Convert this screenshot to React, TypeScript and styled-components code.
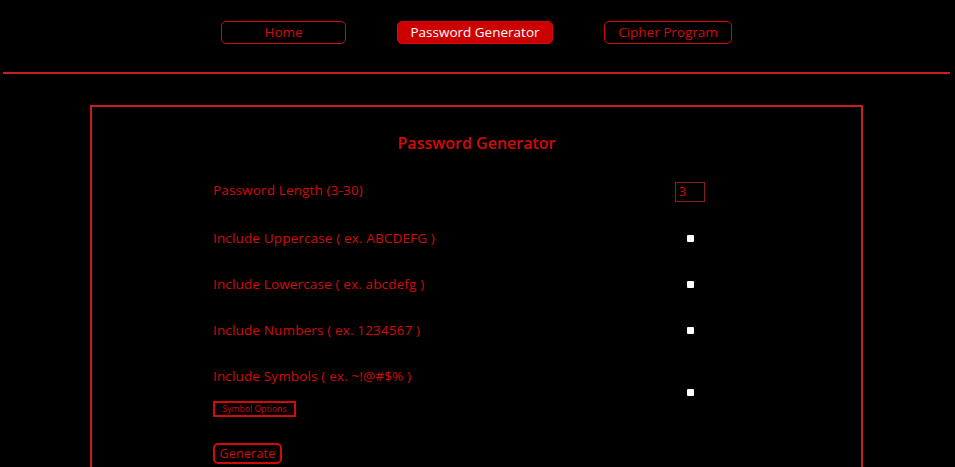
import React from "react";
import styled, { createGlobalStyle } from "styled-components";

const RED = "#d20a0a";

const Global = createGlobalStyle`
  html, body { margin: 0; padding: 0; background: #000; }
  body { font-family: "Open Sans", "Noto Sans", sans-serif; color: ${RED}; }
  * { box-sizing: border-box; }
`;

const Nav = styled.nav`
  display: flex;
  justify-content: center;
  gap: 51px;
  padding: 21px 2px 0 0;
  height: 72px;
`;

const NavButton = styled.button<{ $active?: boolean; $w: number }>`
  width: ${(p) => p.$w}px;
  height: 23px;
  border: 1.5px solid ${RED};
  border-radius: 5px;
  background: ${(p) => (p.$active ? "#cc0000" : "transparent")};
  color: ${(p) => (p.$active ? "#fff" : RED)};
  font-family: inherit;
  font-size: 13.5px;
  line-height: 18px;
  padding: 0 0 1px;
  cursor: pointer;
`;

const Rule = styled.div`
  height: 2px;
  background: #c81e1e;
  margin: 0 5px 0 3px;
`;

const Card = styled.section`
  width: 773px;
  margin: 31px auto 0;
  transform: translateX(-1px);
  border: 2px solid #c81e1e;
  border-bottom: none;
  padding: 25px 0 0 121px;
  height: 400px;
`;

const Title = styled.h1`
  margin: 0 0 11px -121px;
  text-align: center;
  font-size: 16px;
  font-weight: 600;
  color: ${RED};
`;

const Row = styled.div<{ $h: number }>`
  display: flex;
  align-items: center;
  height: ${(p) => p.$h}px;
`;

const LeftCol = styled.div`
  width: 462px;
  display: flex;
  flex-direction: column;
  align-items: flex-start;
`;

const Label = styled.span`
  font-size: 13.5px;
  letter-spacing: 0.15px;
  line-height: 18px;
`;

const RightCol = styled.div`
  display: flex;
  justify-content: center;
  width: 30px;
`;

const NumberInput = styled.input`
  width: 30px;
  height: 20px;
  margin-top: 3px;
  background: transparent;
  border: 1px solid #8b1c1c;
  color: ${RED};
  font-family: inherit;
  font-size: 12px;
  padding: 0 3px;
  outline: none;
`;

const Check = styled.input`
  appearance: none;
  width: 7px;
  height: 7px;
  margin: 0;
  background: #fff;
  border-radius: 1px;
`;

const SmallButton = styled.button`
  margin-top: 16px;
  height: 16px;
  width: 83px;
  padding: 0;
  background: transparent;
  border: 2px solid ${RED};
  color: ${RED};
  font-family: inherit;
  font-size: 8.5px;
  letter-spacing: 0.1px;
  line-height: 10px;
`;

const GenerateButton = styled.button`
  margin-top: 12px;
  height: 21px;
  width: 69px;
  padding: 0;
  background: transparent;
  border: 2px solid ${RED};
  border-radius: 5px;
  color: ${RED};
  font-family: inherit;
  font-size: 12.5px;
  letter-spacing: 0.2px;
  line-height: 15px;
`;

const options = [
  "Include Uppercase ( ex. ABCDEFG )",
  "Include Lowercase ( ex. abcdefg )",
  "Include Numbers ( ex. 1234567 )",
];

export default function App() {
  return (
    <>
      <Global />
      <Nav>
        <NavButton $w={125}>Home</NavButton>
        <NavButton $w={156} $active>Password Generator</NavButton>
        <NavButton $w={128}>Cipher Program</NavButton>
      </Nav>
      <Rule />
      <Card>
        <Title>Password Generator</Title>
        <Row $h={50}>
          <LeftCol>
            <Label>Password Length (3-30)</Label>
          </LeftCol>
          <RightCol>
            <NumberInput type="text" defaultValue="3" />
          </RightCol>
        </Row>
        {options.map((o) => (
          <Row $h={46} key={o}>
            <LeftCol>
              <Label>{o}</Label>
            </LeftCol>
            <RightCol>
              <Check type="checkbox" />
            </RightCol>
          </Row>
        ))}
        <Row $h={78}>
          <LeftCol>
            <Label>Include Symbols ( ex. ~!@#$% )</Label>
            <SmallButton>Symbol Options</SmallButton>
          </LeftCol>
          <RightCol>
            <Check type="checkbox" />
          </RightCol>
        </Row>
        <GenerateButton>Generate</GenerateButton>
      </Card>
    </>
  );
}
